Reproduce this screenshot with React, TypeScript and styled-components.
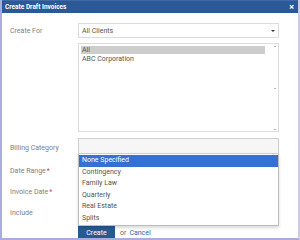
import React from "react";
import styled, { createGlobalStyle } from "styled-components";

const GlobalStyle = createGlobalStyle`
  html, body {
    margin: 0;
    padding: 0;
    background: #ffffff;
  }
  body {
    font-family: Roboto, "Liberation Sans", sans-serif;
  }
`;

const Dialog = styled.div`
  width: 300px;
  height: 240px;
  box-sizing: border-box;
  border-left: 2px solid #a9acdc;
  border-right: 2px solid #c9cbe8;
  border-bottom: 2px solid #a9acdc;
  background: #ffffff;
  overflow: hidden;
  display: flex;
  flex-direction: column;
`;

const Header = styled.div`
  height: 13px;
  margin: 0 -2px;
  padding: 0 6px 0 5px;
  background: #2b5896;
  border-top: 1px solid #3f6aa6;
  box-sizing: border-box;
  display: flex;
  align-items: center;
  justify-content: space-between;
  flex-shrink: 0;
`;

const Title = styled.span`
  color: #ffffff;
  font-size: 6.5px;
  font-weight: 700;
`;

const Close = styled.span`
  color: #ffffff;
  font-size: 9px;
  font-weight: 700;
  line-height: 1;
`;

const Body = styled.div`
  padding: 10px 0 0 8px;
  display: flex;
  flex-direction: column;
`;

const Row = styled.div<{ $h: number; $mt?: number; $top?: boolean }>`
  display: flex;
  align-items: ${(p) => (p.$top ? "flex-start" : "center")};
  height: ${(p) => p.$h}px;
  margin-top: ${(p) => p.$mt ?? 0}px;
`;

const Label = styled.div<{ $dy?: number }>`
  width: 68px;
  flex-shrink: 0;
  font-size: 7px;
  color: #808080;
  padding-top: ${(p) => p.$dy ?? 0}px;
`;

const Req = styled.span`
  color: #d0453a;
  margin-left: 1px;
`;

const Field = styled.div`
  position: relative;
  width: 201px;
  height: 100%;
`;

const SelectBox = styled.div<{ $open?: boolean }>`
  height: 100%;
  box-sizing: border-box;
  border: 1px solid ${(p) => (p.$open ? "#cfcfcf" : "#dcdcdc")};
  background: ${(p) => (p.$open ? "#f6f6f6" : "#ffffff")};
  display: flex;
  align-items: center;
  justify-content: space-between;
  padding: 0 3px 0 3px;
  font-size: 7px;
  color: #555;
`;

const Caret = styled.span`
  width: 0;
  height: 0;
  border-left: 2px solid transparent;
  border-right: 2px solid transparent;
  border-top: 2px solid #333;
`;

const ListBox = styled.div`
  position: relative;
  height: 100%;
  box-sizing: border-box;
  border: 1px solid #dcdcdc;
  padding: 2px 13px 0 2px;
  font-size: 7px;
  color: #555;
`;

const Option = styled.div<{ $selected?: boolean }>`
  height: 8px;
  line-height: 8px;
  padding: 0 1px;
  margin-bottom: 1px;
  background: ${(p) => (p.$selected ? "#cdcdcd" : "transparent")};
`;

const ScrollMark = styled.span<{ $y: number }>`
  position: absolute;
  right: 2px;
  top: ${(p) => p.$y}px;
  width: 2px;
  height: 1px;
  background: #b5b5b5;
`;

const Drop = styled.div`
  position: absolute;
  top: 100%;
  left: 0;
  width: 201px;
  box-sizing: border-box;
  border: 1px solid #bdbdbd;
  border-top: none;
  background: #ffffff;
  box-shadow: 0 2px 3px rgba(0, 0, 0, 0.15);
  z-index: 2;
  font-size: 7px;
  color: #555;
  padding-top: 1px;
`;

const DropItem = styled.div<{ $active?: boolean }>`
  height: 11.6px;
  line-height: 11.6px;
  padding: 0 3px;
  color: ${(p) => (p.$active ? "#ffffff" : "#555")};
  background: ${(p) => (p.$active ? "#3571d4" : "transparent")};
`;

const Actions = styled.div`
  display: flex;
  align-items: center;
  gap: 5px;
  font-size: 7px;
`;

const Button = styled.button`
  width: 37px;
  height: 15px;
  border: none;
  background: #285a92;
  color: #ffffff;
  font-family: inherit;
  font-size: 7px;
  padding: 0;
`;

const Or = styled.span`
  color: #666;
`;

const Link = styled.a`
  color: #2f67ad;
  margin-left: -2px;
`;

const categories = [
  "None Specified",
  "Contingency",
  "Family Law",
  "Quarterly",
  "Real Estate",
  "Splits",
];

export default function App() {
  return (
    <>
      <GlobalStyle />
      <Dialog>
        <Header>
          <Title>Create Draft Invoices</Title>
          <Close>×</Close>
        </Header>
        <Body>
          <Row $h={15}>
            <Label>Create For</Label>
            <Field>
              <SelectBox>
                All Clients
                <Caret />
              </SelectBox>
            </Field>
          </Row>
          <Row $h={89} $mt={5} $top>
            <Label />
            <Field>
              <ListBox>
                <Option $selected>All</Option>
                <Option>ABC Corporation</Option>
                <ScrollMark $y={2} />
                <ScrollMark $y={44} />
                <ScrollMark $y={85} />
              </ListBox>
            </Field>
          </Row>
          <Row $h={16} $mt={6}>
            <Label $dy={4}>Billing Category</Label>
            <Field>
              <SelectBox $open />
              <Drop>
                {categories.map((c, i) => (
                  <DropItem key={c} $active={i === 0}>
                    {c}
                  </DropItem>
                ))}
              </Drop>
            </Field>
          </Row>
          <Row $h={21} $mt={6}>
            <Label>
              Date Range<Req>*</Req>
            </Label>
          </Row>
          <Row $h={21}>
            <Label>
              Invoice Date<Req>*</Req>
            </Label>
          </Row>
          <Row $h={21}>
            <Label>Include</Label>
          </Row>
          <Row $h={15} $mt={2}>
            <Label />
            <Actions>
              <Button>Create</Button>
              <Or>or</Or>
              <Link>Cancel</Link>
            </Actions>
          </Row>
        </Body>
      </Dialog>
    </>
  );
}
